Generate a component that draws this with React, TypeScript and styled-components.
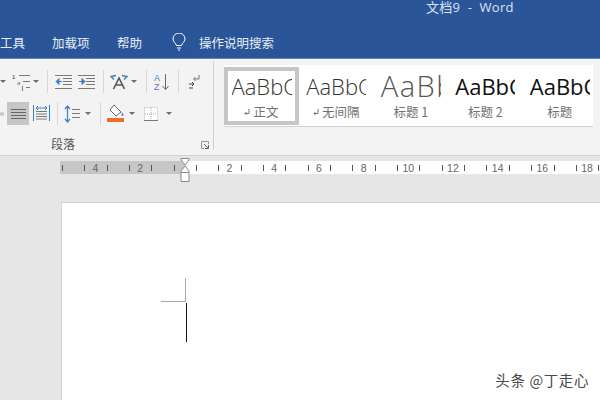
import styled, { createGlobalStyle } from 'styled-components';

const GlobalStyle = createGlobalStyle`
  html, body {
    margin: 0;
    padding: 0;
    width: 600px;
    height: 400px;
    overflow: hidden;
    background: #e6e6e6;
  }
  * { box-sizing: border-box; }
`;

const Window = styled.div`
  position: relative;
  width: 600px;
  height: 400px;
  overflow: hidden;
  display: flex;
  flex-direction: column;
  font-family: "Noto Sans CJK SC", "Liberation Sans", sans-serif;
`;

const TitleBar = styled.div`
  height: 59px;
  flex: none;
  background: #2a5699;
  color: #fff;
  display: flex;
  flex-direction: column;
  border-bottom: 1px solid #5f86bd;
`;

const TitleRow = styled.div`
  height: 32px;
  padding: 0 0 0 426px;
  font-size: 13px;
  line-height: 14px;
  letter-spacing: 0.3px;
  color: #dbe4f1;
  white-space: pre;
  font-family: "Open Sans", "Noto Sans CJK SC", sans-serif;
`;

const TabRow = styled.div`
  display: flex;
  align-items: center;
  height: 20px;
  font-size: 12.5px;
  color: #e8eef6;
`;

const Tab = styled.span<{ $w: number }>`
  width: ${p => p.$w}px;
  flex: none;
  display: flex;
  align-items: center;
  white-space: nowrap;
`;

const Ribbon = styled.div`
  height: 97px;
  flex: none;
  display: flex;
  background: #f3f3f3;
  border-bottom: 1px solid #d2d2d2;
`;

const ParagraphGroup = styled.div`
  width: 214px;
  flex: none;
  margin: 2px 0 5px;
  padding-top: 9px;
  border-right: 1px solid #cfcfcf;
  display: flex;
  flex-direction: column;
  gap: 9px;
`;

const ToolRow = styled.div`
  display: flex;
  align-items: center;
  height: 23px;
`;

const Slot = styled.div<{ $w: number; $on?: boolean }>`
  width: ${p => p.$w}px;
  height: 100%;
  flex: none;
  display: flex;
  align-items: center;
  justify-content: center;
  overflow: hidden;
  background: ${p => (p.$on ? '#c6c6c6' : 'transparent')};
`;

const Sep = styled.span`
  width: 1px;
  height: 24px;
  background: #d6d6d6;
`;

const Caret = styled.span`
  width: 0;
  height: 0;
  border-left: 3px solid transparent;
  border-right: 3px solid transparent;
  border-top: 3px solid #6e6e6e;
`;

const GroupFooter = styled.div`
  display: flex;
  align-items: center;
  justify-content: space-between;
  margin: auto 0 -2px;
  padding: 0 4px 0 51px;
  height: 18px;
`;

const GroupLabel = styled.span`
  font-size: 12px;
  color: #555;
`;

const Launcher = styled.svg`
  margin-top: 4px;
`;

const Gallery = styled.div`
  width: 369px;
  height: 62px;
  flex: none;
  margin: 6px 0 0 10px;
  display: flex;
  background: #fff;
  border-bottom: 1px solid #d4d4d4;
`;

const StyleCard = styled.div<{ $on?: boolean }>`
  width: ${p => (p.$on ? 75 : 74.5)}px;
  height: 58px;
  flex: none;
  margin-top: 2px;
  display: flex;
  flex-direction: column;
  align-items: center;
  border: 4px solid ${p => (p.$on ? '#c6c6c6' : 'transparent')};
`;

const Preview = styled.div<{ $size: number; $weight: number; $color: string; $spacing?: number }>`
  width: 60px;
  height: 30px;
  flex: none;
  overflow: hidden;
  font-family: "Open Sans", "Liberation Sans", sans-serif;
  font-size: ${p => p.$size}px;
  line-height: 30px;
  font-weight: ${p => p.$weight};
  color: ${p => p.$color};
  letter-spacing: ${p => p.$spacing ?? 0}px;
  white-space: nowrap;
`;

const StyleName = styled.div`
  display: flex;
  align-items: center;
  gap: 3px;
  margin-top: 3px;
  font-size: 12.5px;
  line-height: 16px;
  color: #707070;
`;

const Workspace = styled.div`
  flex: 1;
  min-height: 0;
  background: #e6e6e6;
  display: flex;
  flex-direction: column;
`;

const Ruler = styled.div`
  position: relative;
  display: flex;
  height: 13px;
  margin: 5px 0 0 60px;
  flex: none;
`;

const RulerPart = styled.div<{ $w: number; $margin: boolean }>`
  width: ${p => p.$w}px;
  flex: none;
  display: flex;
  overflow: hidden;
  background: ${p => (p.$margin ? '#c6c6c6' : '#fff')};
`;

const RulerCell = styled.div<{ $w: number; $tick: boolean }>`
  width: ${p => p.$w}px;
  flex: none;
  display: flex;
  align-items: center;
  justify-content: center;
  font-family: "Liberation Sans", sans-serif;
  font-size: 10.5px;
  color: #666;
  background: ${p =>
    p.$tick ? 'linear-gradient(#555, #555) left center / 1px 6px no-repeat' : 'none'};
`;

const IndentMarker = styled.svg`
  position: absolute;
  left: 120px;
  top: -3px;
`;

const Page = styled.div`
  flex: 1;
  margin: 28px 0 0 61px;
  padding: 75px 0 0 99px;
  background: #fff;
  border-top: 1px solid #d3d3d3;
  border-left: 1px solid #d3d3d3;
`;

const CropMark = styled.div`
  width: 25px;
  height: 24px;
  border-right: 1px solid #a8a8a8;
  border-bottom: 1px solid #a8a8a8;
`;

const TextCursor = styled.div`
  width: 1px;
  height: 39px;
  margin: 1px 0 0 25px;
  background: #111;
`;

const Watermark = styled.div`
  position: absolute;
  right: 11px;
  bottom: 10px;
  font-size: 14.5px;
  line-height: 20px;
  letter-spacing: 0.6px;
  color: #4a4a4a;
  text-shadow: 0 0 2px #fff;
`;

const BLUE = '#3f7fbf';
const GREY = '#7a7a7a';

const lines = (ys: number[], x1: number, x2: number, color = GREY) =>
  ys.map(y => <line key={y} x1={x1} x2={x2} y1={y} y2={y} stroke={color} />);

const ListIcon = () => (
  <svg width="20" height="20" viewBox="0 0 20 20">
    <text x="0" y="7" fontSize="6" fill="#333" fontFamily="Liberation Sans">1</text>
    <text x="5" y="13" fontSize="6" fill={BLUE} fontFamily="Liberation Sans">a</text>
    {lines([3.5], 7, 18)}
    {lines([9.5], 11, 18)}
    {lines([15.5], 14, 18)}
    <line x1="10.5" x2="10.5" y1="14" y2="19" stroke={GREY} />
  </svg>
);

const OutdentIcon = ({ flip }: { flip?: boolean }) => (
  <svg width="18" height="16" viewBox="0 0 18 16">
    {lines([1.5, 14.5], 0, 17)}
    {lines([4.5, 7.5, 10.5], 8, 17)}
    {flip ? (
      <path d="M1 7.5h4M4 4.5l3 3-3 3z" stroke={BLUE} fill={BLUE} />
    ) : (
      <path d="M7 7.5H3M4 4.5l-3 3 3 3z" stroke={BLUE} fill={BLUE} />
    )}
  </svg>
);

const SpacingIcon = () => (
  <svg width="18" height="17" viewBox="0 0 18 17">
    <path d="M3.5 16L9 5l5.5 11M5.5 12h7" stroke="#555" strokeWidth="1.6" fill="none" />
    <path d="M6 2.5L1 3.5l3 3M12 2.5l5 1-3 3" stroke={BLUE} strokeWidth="1.4" fill="none" />
  </svg>
);

const SortIcon = () => (
  <svg width="16" height="18" viewBox="0 0 16 18">
    <text x="0" y="8" fontSize="9" fill={BLUE} fontFamily="Liberation Sans">A</text>
    <text x="0" y="17" fontSize="9" fill="#8e5bb5" fontFamily="Liberation Sans">Z</text>
    <path d="M11.5 1v15M8.500 13l3 3.500 3-3.500" stroke="#666" fill="none" />
  </svg>
);

const MarkIcon = () => (
  <svg width="12" height="15" viewBox="0 0 12 15">
    <path d="M11 1v4H6M7.500 3L5.500 5l2 2" stroke="#777" fill="none" />
    <path d="M1 10h5M4 8l2 2-2 2M1 14h4" stroke="#444" fill="none" />
  </svg>
);

const AlignIcon = () => (
  <svg width="15" height="12" viewBox="0 0 15 12">
    {lines([1.5, 4.5, 7.5, 10.5], 0, 15, '#666')}
  </svg>
);

const DistributeIcon = () => (
  <svg width="17" height="17" viewBox="0 0 17 17">
    <path d="M.5 0v16M16.500 0v16" stroke={BLUE} />
    {lines([6.5, 9, 11.5, 14], 3, 14, '#777')}
    <path d="M3 3h11M5 1L3 3l2 2M12 1l2 2-2 2" stroke={BLUE} fill="none" />
  </svg>
);

const LineSpacingIcon = () => (
  <svg width="17" height="18" viewBox="0 0 17 18">
    <path d="M3.500 1v16M1 4l2.500-3L6 4M1 14l2.500 3L6 14" stroke={BLUE} fill="none" strokeWidth="1.2" />
    {lines([4.5, 8.5, 12.5], 8, 16)}
  </svg>
);

const FillIcon = () => (
  <svg width="18" height="19" viewBox="0 0 18 19">
    <path d="M7 1l7 7-5 4-6-6z" fill="#fff" stroke="#666" />
    <path d="M15 8c1 2 2 3 1 4s-2-1-1-4z" fill={BLUE} />
    <rect x="0" y="14" width="17" height="4" fill="#e8702a" />
  </svg>
);

const BordersIcon = () => (
  <svg width="14" height="14" viewBox="0 0 14 14">
    <rect x=".5" y=".5" width="13" height="13" fill="#fff" stroke="#bbb" strokeDasharray="1 1" />
    <path d="M7 1v12M1 7h12" stroke="#aaa" strokeDasharray="1 1" />
    <path d="M0 13.500h14" stroke="#777" />
  </svg>
);

const Bulb = () => (
  <svg width="14" height="18" viewBox="0 0 14 18">
    <path
      d="M4.500 12.500C4 10 1 9 1 6a6 6 0 0 1 12 0c0 3-3 4-3.500 6.500zM5 15h4M6 17h2"
      stroke="#fff"
      fill="none"
    />
  </svg>
);

const ReturnMark = () => (
  <svg width="6" height="7" viewBox="0 0 6 7">
    <path d="M5 0v4.500H1M2.500 3L1 4.500 2.500 6" stroke="#777" fill="none" />
  </svg>
);

const cell = 22.35;

const marginCells = [
  { w: 2 },
  { w: cell, tick: true },
  { w: cell, tick: true, n: '4' },
  { w: cell, tick: true },
  { w: cell, tick: true, n: '2' },
  { w: cell, tick: true },
  { w: 11.5, tick: true },
];

const bodyCells = [
  { w: 11 },
  ...Array.from({ length: 19 }, (_, i) => ({
    w: cell,
    tick: true,
    n: i % 2 === 1 ? String(i + 1) : undefined,
  })),
];

const styles = [
  { name: '正文', mark: true, size: 22, weight: 300, color: '#333', on: true },
  { name: '无间隔', mark: true, size: 22, weight: 300, color: '#333' },
  { name: '标题 1', size: 29, weight: 300, color: '#555', spacing: 1.5 },
  { name: '标题 2', size: 22, weight: 400, color: '#111' },
  { name: '标题', size: 22, weight: 400, color: '#111' },
];

export default function App() {
  return (
    <Window>
      <GlobalStyle />
      <TitleBar>
        <TitleRow>文档9  -  Word</TitleRow>
        <TabRow>
          <Tab $w={52}>工具</Tab>
          <Tab $w={65}>加载项</Tab>
          <Tab $w={55}>帮助</Tab>
          <Tab $w={27}>
            <Bulb />
          </Tab>
          <Tab $w={80}>操作说明搜索</Tab>
        </TabRow>
      </TitleBar>

      <Ribbon>
        <ParagraphGroup>
          <ToolRow>
            <Slot $w={6}><Caret /></Slot>
            <Slot $w={6} />
            <Slot $w={20}><ListIcon /></Slot>
            <Slot $w={7}><Caret /></Slot>
            <Slot $w={16}><Sep /></Slot>
            <Slot $w={18}><OutdentIcon /></Slot>
            <Slot $w={5} />
            <Slot $w={18}><OutdentIcon flip /></Slot>
            <Slot $w={14}><Sep /></Slot>
            <Slot $w={18}><SpacingIcon /></Slot>
            <Slot $w={12}><Caret /></Slot>
            <Slot $w={13}><Sep /></Slot>
            <Slot $w={18}><SortIcon /></Slot>
            <Slot $w={14}><Sep /></Slot>
            <Slot $w={18}><MarkIcon /></Slot>
          </ToolRow>
          <ToolRow>
            <Slot $w={4}><AlignIcon /></Slot>
            <Slot $w={3} />
            <Slot $w={22} $on><AlignIcon /></Slot>
            <Slot $w={3} />
            <Slot $w={18}><DistributeIcon /></Slot>
            <Slot $w={14}><Sep /></Slot>
            <Slot $w={17}><LineSpacingIcon /></Slot>
            <Slot $w={13}><Caret /></Slot>
            <Slot $w={12}><Sep /></Slot>
            <Slot $w={1} />
            <Slot $w={18}><FillIcon /></Slot>
            <Slot $w={13}><Caret /></Slot>
            <Slot $w={26}><BordersIcon /></Slot>
            <Slot $w={10}><Caret /></Slot>
          </ToolRow>
          <GroupFooter>
            <GroupLabel>段落</GroupLabel>
            <Launcher width="8" height="8" viewBox="0 0 8 8">
              <path d="M7.500 3V.5H.5v7H3" stroke="#999" fill="none" />
              <path d="M3 3l4 4M7.500 4v3.500H4" stroke="#666" fill="none" />
            </Launcher>
          </GroupFooter>
        </ParagraphGroup>

        <Gallery>
          {styles.map(s => (
            <StyleCard key={s.name} $on={s.on}>
              <Preview $size={s.size} $weight={s.weight} $color={s.color} $spacing={s.spacing}>
                AaBbC
              </Preview>
              <StyleName>
                {s.mark && <ReturnMark />}
                {s.name}
              </StyleName>
            </StyleCard>
          ))}
        </Gallery>
      </Ribbon>

      <Workspace>
        <Ruler>
          <RulerPart $w={125} $margin>
            {marginCells.map((c, i) => (
              <RulerCell key={i} $w={c.w} $tick={!!c.tick}>{c.n}</RulerCell>
            ))}
          </RulerPart>
          <RulerPart $w={415} $margin={false}>
            {bodyCells.map((c, i) => (
              <RulerCell key={i} $w={c.w} $tick={!!c.tick}>{c.n}</RulerCell>
            ))}
          </RulerPart>
          <IndentMarker width="10" height="25" viewBox="0 0 10 25">
            <path
              d="M1 .5h8v1.500L5 7 1 2zM5 8l4 5v1.500H1V13zM1 14.500h8v9H1z"
              fill="#fff"
              stroke="#8a8a8a"
            />
          </IndentMarker>
        </Ruler>
        <Page>
          <CropMark />
          <TextCursor />
        </Page>
      </Workspace>

      <Watermark>头条 @丁走心</Watermark>
    </Window>
  );
}
